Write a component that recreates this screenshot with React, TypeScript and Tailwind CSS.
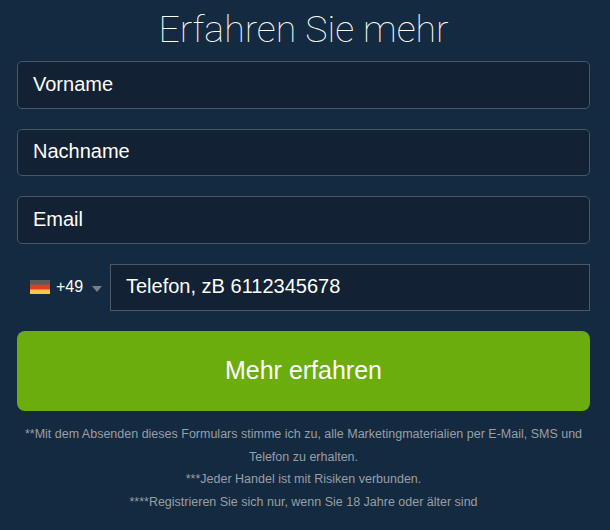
const fields = ["Vorname", "Nachname", "Email"]

const notes = [
  "**Mit dem Absenden dieses Formulars stimme ich zu, alle Marketingmaterialien per E-Mail, SMS und Telefon zu erhalten.",
  "***Jeder Handel ist mit Risiken verbunden.",
  "****Registrieren Sie sich nur, wenn Sie 18 Jahre oder älter sind",
]

function GermanFlag() {
  return (
    <svg width="20" height="14" viewBox="0 0 20 14" className="block">
      <rect width="20" height="14" rx="1" fill="#6b6b6b" />
      <rect x="0" y="4.5" width="20" height="5" fill="#e8372c" />
      <rect x="0" y="9.5" width="20" height="4.5" fill="#f7c93e" />
      <rect x="0" y="0" width="20" height="4.5" fill="#5a5a5a" />
    </svg>
  )
}

export default function App() {
  return (
    <div className="w-[610px] h-[530px] overflow-hidden bg-[#132a40] font-['Liberation_Sans',Arial,sans-serif]">
      <div className="w-[573px] ml-[17px]">
        <h1 className="h-[61px] pt-[5px] text-center font-['Roboto',sans-serif] font-thin text-[37.5px] leading-[48px] text-white">
          Erfahren Sie mehr
        </h1>

        <form className="flex flex-col gap-5">
          {fields.map((field) => (
            <div
              key={field}
              className="flex h-[47.5px] items-center rounded-[5px] border border-[#47586a] bg-[#122133] px-[15px] pb-[2px] text-[20px] text-white"
            >
              {field}
            </div>
          ))}

          <div className="flex h-[47.5px] items-center">
            <div className="flex w-[93px] items-center pl-[13px] text-white">
              <GermanFlag />
              <span className="ml-[6px] text-[16px]">+49</span>
              <span className="ml-[9px] mt-[3px] h-0 w-0 border-x-[5px] border-t-[6px] border-x-transparent border-t-[#777f88]" />
            </div>
            <div className="flex h-[47.5px] flex-1 items-center border border-[#4c5966] bg-[#122133] px-[15px] pb-[2px] text-[20px] text-white">
              Telefon, zB 6112345678
            </div>
          </div>

          <button
            type="button"
            className="h-20 rounded-[8px] bg-[#6aad0c] text-center text-[25px] text-white"
          >
            Mehr erfahren
          </button>
        </form>

        <div className="mx-auto mt-[12px] w-[570px] text-center text-[12.5px] leading-[22.6px] text-[#9a9fa6]">
          {notes.map((note) => (
            <p key={note}>{note}</p>
          ))}
        </div>
      </div>
    </div>
  )
}
